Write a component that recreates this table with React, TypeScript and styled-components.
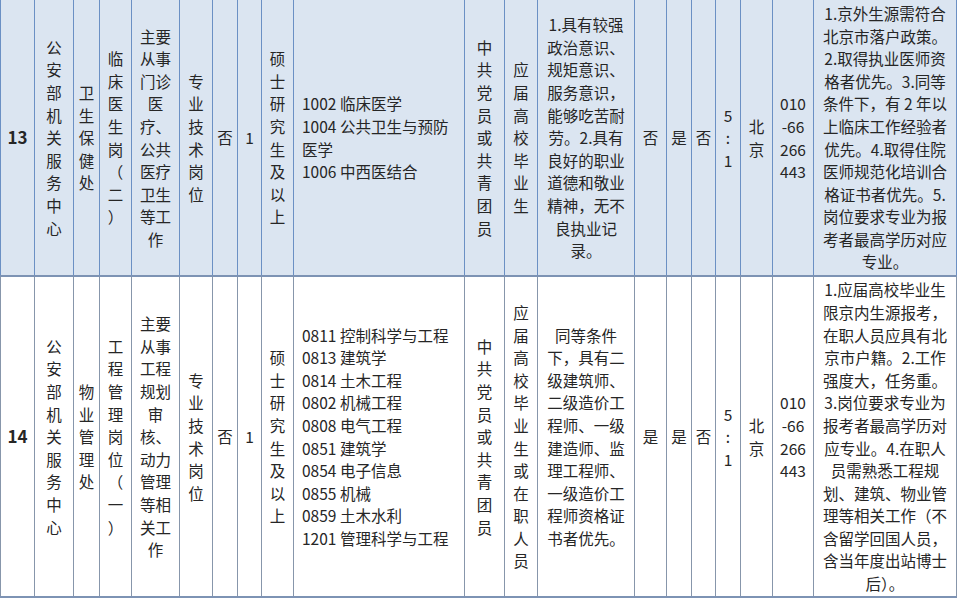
import React from "react";
import styled, { createGlobalStyle } from "styled-components";

type Content = string | string[];

interface Column {
  width: number;
  pad: number;
  stack?: boolean;
  left?: boolean;
}

interface Post {
  shaded: boolean;
  height: number;
  cells: Content[];
}

const columns: Column[] = [
  { width: 34, pad: 2 },
  { width: 39, pad: 5, stack: true },
  { width: 26, pad: 3, stack: true },
  { width: 32, pad: 3, stack: true },
  { width: 48, pad: 5 },
  { width: 33, pad: 3, stack: true },
  { width: 25, pad: 2, stack: true },
  { width: 24, pad: 2 },
  { width: 32, pad: 3, stack: true },
  { width: 171, pad: 8, left: true },
  { width: 40, pad: 5, stack: true },
  { width: 33, pad: 3, stack: true },
  { width: 97, pad: 7 },
  { width: 32, pad: 3, stack: true },
  { width: 25, pad: 2, stack: true },
  { width: 24, pad: 2, stack: true },
  { width: 25, pad: 2 },
  { width: 32, pad: 3, stack: true },
  { width: 41, pad: 3 },
  { width: 143, pad: 7 },
];

const posts: Post[] = [
  {
    shaded: true,
    height: 276,
    cells: [
      "13",
      "公安部机关服务中心",
      "卫生保健处",
      "临床医生岗（二）",
      "主要从事门诊医疗、公共医疗卫生等工作",
      "专业技术岗位",
      "否",
      "1",
      "硕士研究生及以上",
      ["1002 临床医学", "1004 公共卫生与预防医学", "1006 中西医结合"],
      "中共党员或共青团员",
      "应届高校毕业生",
      "1.具有较强政治意识、规矩意识、服务意识，能够吃苦耐劳。2.具有良好的职业道德和敬业精神，无不良执业记录。",
      "否",
      "是",
      "否",
      ["5", ":", "1"],
      "北京",
      ["010", "-66", "266", "443"],
      "1.京外生源需符合北京市落户政策。2.取得执业医师资格者优先。3.同等条件下，有 2 年以上临床工作经验者优先。4.取得住院医师规范化培训合格证书者优先。5.岗位要求专业为报考者最高学历对应专业。",
    ],
  },
  {
    shaded: false,
    height: 321,
    cells: [
      "14",
      "公安部机关服务中心",
      "物业管理处",
      "工程管理岗位（一）",
      "主要从事工程规划审核、动力管理等相关工作",
      "专业技术岗位",
      "否",
      "1",
      "硕士研究生及以上",
      [
        "0811 控制科学与工程",
        "0813 建筑学",
        "0814 土木工程",
        "0802 机械工程",
        "0808 电气工程",
        "0851 建筑学",
        "0854 电子信息",
        "0855 机械",
        "0859 土木水利",
        "1201 管理科学与工程",
      ],
      "中共党员或共青团员",
      "应届高校毕业生或在职人员",
      "同等条件下，具有二级建筑师、二级造价工程师、一级建造师、监理工程师、一级造价工程师资格证书者优先。",
      "是",
      "是",
      "否",
      ["5", ":", "1"],
      "北京",
      ["010", "-66", "266", "443"],
      "1.应届高校毕业生限京内生源报考，在职人员应具有北京市户籍。2.工作强度大，任务重。3.岗位要求专业为报考者最高学历对应专业。4.在职人员需熟悉工程规划、建筑、物业管理等相关工作（不含留学回国人员，含当年度出站博士后）。",
    ],
  },
];

// stacked columns read top to bottom, one character per line
const renderContent = (content: Content, stack: boolean) => {
  const lines = Array.isArray(content) ? content : stack ? Array.from(content) : null;
  if (!lines) return content;
  return lines.map((line, i) => (
    <Line key={i} $narrow={stack && /[（）]/.test(line)}>
      {line}
    </Line>
  ));
};

const App = () => {
  return (
    <>
      <GlobalStyle />
      <Sheet>
        <colgroup>
          {columns.map((col, i) => (
            <col key={i} style={{ width: col.width }} />
          ))}
        </colgroup>
        <tbody>
          {posts.map((post) => (
            <Row key={post.cells[0] as string} $shaded={post.shaded} $height={post.height}>
              {post.cells.map((content, i) =>
                i === 0 ? (
                  <NumberCell key={i} $shaded={post.shaded}>
                    {content}
                  </NumberCell>
                ) : (
                  <Cell
                    key={i}
                    $shaded={post.shaded}
                    $pad={columns[i].pad}
                    $left={!!columns[i].left}
                  >
                    {renderContent(content, !!columns[i].stack)}
                  </Cell>
                )
              )}
            </Row>
          ))}
        </tbody>
      </Sheet>
    </>
  );
};

export default App;

const GlobalStyle = createGlobalStyle`
  html, body {
    margin: 0;
    padding: 0;
    background: #ffffff;
  }
  body {
    font-family: "Noto Sans CJK SC", "Liberation Sans", sans-serif;
  }
`;

const Sheet = styled.table`
  border-collapse: collapse;
  table-layout: fixed;
  width: 956px;
  color: #262626;
  font-size: 15.5px;
  line-height: 22.6px;
`;

const Row = styled.tr<{ $shaded: boolean; $height: number }>`
  height: ${(p) => p.$height}px;
  background: ${(p) => (p.$shaded ? "#dbe5f1" : "#ffffff")};

  & + & > td {
    border-top: 2px solid #6f98cf;
  }
`;

const Cell = styled.td<{ $shaded: boolean; $pad: number; $left?: boolean }>`
  padding: 0 ${(p) => (p.$left ? 12 : p.$pad)}px 0 ${(p) => p.$pad}px;
  border-left: 1.5px solid ${(p) => (p.$shaded ? "#6b90c4" : "#8796ab")};
  border-right: 1.5px solid ${(p) => (p.$shaded ? "#6b90c4" : "#8796ab")};
  border-bottom: 2px solid #7d93b4;
  vertical-align: middle;
  text-align: ${(p) => (p.$left ? "left" : "center")};
  overflow: hidden;
`;

const NumberCell = styled(Cell).attrs({ $pad: 2 })`
  font-weight: 700;
  font-size: 17px;
`;

const Line = styled.div<{ $narrow?: boolean }>`
  display: block;
  ${(p) => p.$narrow && "text-spacing-trim: space-all; font-feature-settings: 'halt' 0;"}
`;
